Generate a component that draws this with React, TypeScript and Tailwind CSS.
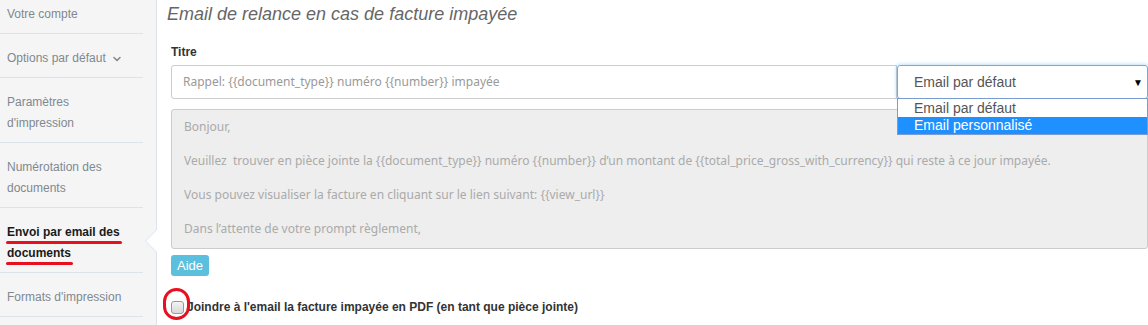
import { ChevronDown } from 'lucide-react';

const menu = [
  { label: ['Votre compte'] },
  { label: ['Options par défaut'], chevron: true },
  { label: ['Paramètres', "d'impression"] },
  { label: ['Numérotation des', 'documents'] },
  { label: ['Envoi par email des', 'documents'], active: true },
  { label: ["Formats d'impression"] },
];

const body = [
  'Bonjour,',
  'Veuillez  trouver en pièce jointe la {{document_type}} numéro {{number}} d’un montant de {{total_price_gross_with_currency}} qui reste à ce jour impayée.',
  'Vous pouvez visualiser la facture en cliquant sur le lien suivant: {{view_url}}',
  'Dans l’attente de votre prompt règlement,',
];

export default function App() {
  return (
    <div className="flex h-[325px] w-[1148px] overflow-hidden bg-white font-['Liberation_Sans',Arial,sans-serif]">
      <Sidebar />
      <main className="flex-1 pl-[14px] pt-[3px]">
        <h1 className="-ml-[4px] text-[18px] italic leading-[22px] text-[#666]">
          Email de relance en cas de facture impayée
        </h1>

        <label className="mt-[20px] block text-[12px] font-bold leading-[14px] text-[#333]">Titre</label>

        <div className="mt-[6px] flex">
          <div className="flex h-[34px] w-[726px] items-center rounded-l-[3px] border border-[#ccc] pl-[11px] font-['Noto_Sans',sans-serif] text-[12px] text-[#999]">
            Rappel: {'{{document_type}}'} numéro {'{{number}}'} impayée
          </div>
          <div className="relative flex-1">
            <div className="flex h-[34px] items-center justify-between rounded-[3px] border border-[#66afe9] pl-[16px] pr-[4px] text-[14px] text-[#555] shadow-[0_0_4px_rgba(102,175,233,0.6)]">
              <span>Email par défaut</span>
              <span className="text-[10px] text-black">▼</span>
            </div>
            <ul className="absolute left-0 right-0 top-[33px] z-10 border border-[#7a9cd3] bg-white pt-[1px] text-[14px] leading-[17px]">
              <li className="pl-[16px] text-[#555]">Email par défaut</li>
              <li className="bg-[#1e90ff] pl-[16px] text-white">Email personnalisé</li>
            </ul>
          </div>
        </div>

        <div className="mt-[10px] h-[140px] rounded-[3px] border border-[#ccc] bg-[#eee] px-[12px] pt-[8px] font-['Noto_Sans',sans-serif] text-[12px] leading-[17px] text-[#aaa]">
          {body.map((line, i) => (
            <p key={i} className="mb-[17px] whitespace-pre">{line}</p>
          ))}
        </div>

        <button className="mt-[6px] h-[21px] rounded-[3px] bg-[#5bc0de] px-[6px] text-[13px] leading-[21px] text-white">
          Aide
        </button>

        <div className="relative mt-[21px] flex items-center gap-[3px]">
          <span className="h-[13px] w-[13px] rounded-[3px] border border-[#999] bg-gradient-to-b from-[#f4f4f4] to-[#d8d8d8]" />
          <span className="text-[12px] font-bold text-[#333]">
            Joindre à l'email la facture impayée en PDF (en tant que pièce jointe)
          </span>
          <span className="absolute left-[-8px] top-[-10px] h-[32px] w-[27px] rounded-full border-[3px] border-[#e8101e]" />
        </div>
      </main>
    </div>
  );
}

function Sidebar() {
  return (
    <aside className="relative w-[157px] shrink-0 border-r border-[#dde3ea] bg-[#f5f5f5] pr-[13px]">
      <ul className="-mt-[10px]">
        {menu.map((item, i) => (
          <li
            key={i}
            className={`relative border-b border-[#dde3ea] pt-[14px] pb-[8px] pl-[7px] text-[12px] leading-[21px] ${
              item.active ? 'font-bold text-[#1a1a1a]' : 'text-[#808890]'
            }`}
          >
            {item.label.map((l, j) => (
              <div key={j} className="flex items-center">
                <span className="relative">
                  {l}
                  {item.active && (
                    <span className="absolute -left-[1px] -right-[2px] bottom-[-1px] h-[3px] rounded-full bg-[#e8101e]" />
                  )}
                </span>
                {item.chevron && <ChevronDown className="ml-[5px] size-[12px]" strokeWidth={3} />}
              </div>
            ))}
            {item.active && (
              <span className="absolute right-[-14px] top-[21px] h-0 w-0 border-y-[12px] border-r-[12px] border-y-transparent border-r-[#dde3ea]">
                <span className="absolute left-[1px] top-[-11px] h-0 w-0 border-y-[11px] border-r-[11px] border-y-transparent border-r-white" />
              </span>
            )}
          </li>
        ))}
      </ul>
    </aside>
  );
}
